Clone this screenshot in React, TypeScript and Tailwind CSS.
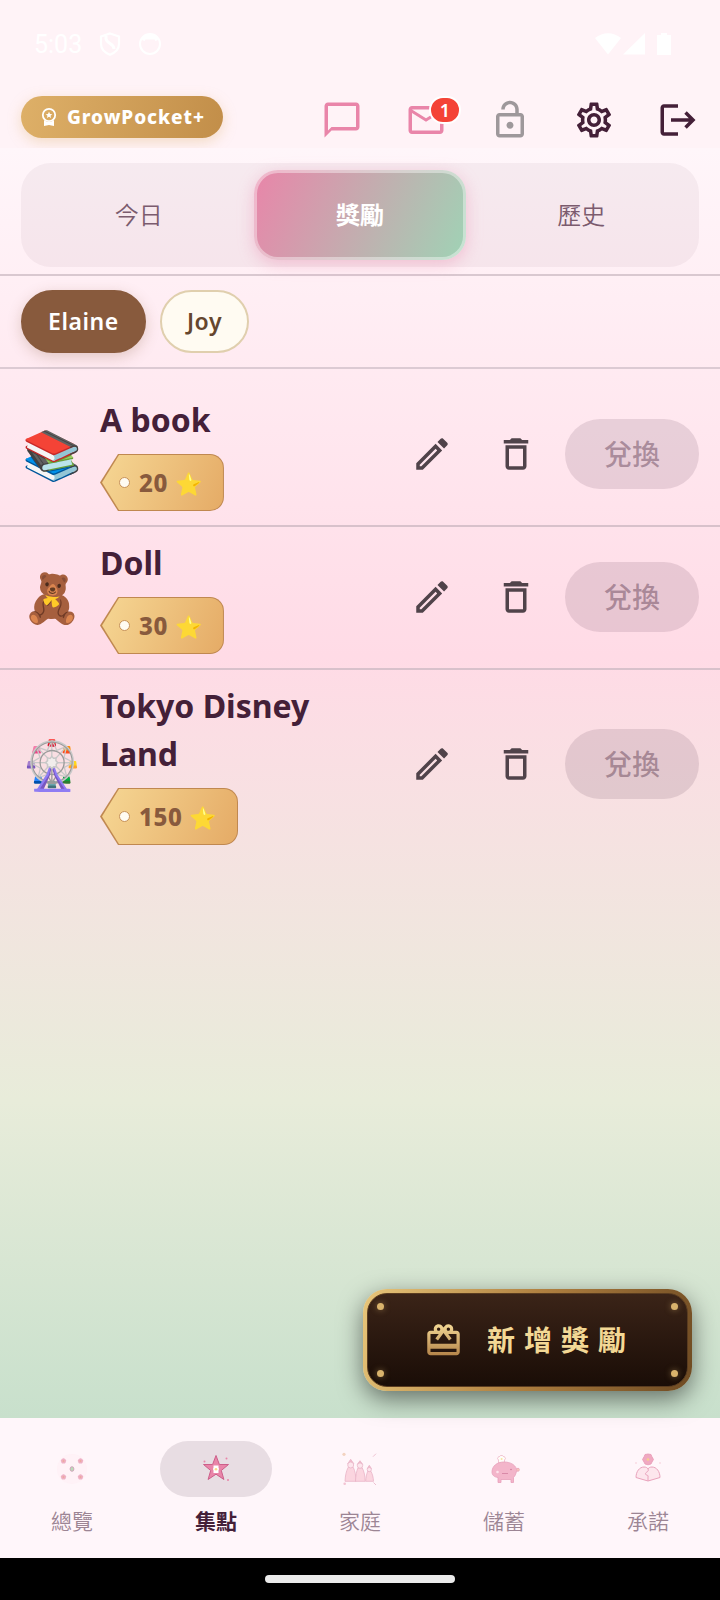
import { clsx } from "clsx";
import type { ReactNode } from "react";
import {
  MdChatBubbleOutline,
  MdDeleteOutline,
  MdLogout,
  MdMailOutline,
  MdOutlineEdit,
  MdOutlineLockOpen,
  MdOutlineRedeem,
  MdOutlineSettings,
} from "react-icons/md";

interface Reward {
  id: string;
  emoji: string;
  title: string;
  cost: number;
}

const rewards: Reward[] = [
  { id: "book", emoji: "📚", title: "A book", cost: 20 },
  { id: "doll", emoji: "🧸", title: "Doll", cost: 30 },
  { id: "disney", emoji: "🎡", title: "Tokyo Disney Land", cost: 150 },
];

const tabs = [
  { id: "today", label: "今日" },
  { id: "rewards", label: "獎勵" },
  { id: "history", label: "歷史" },
];

const children = ["Elaine", "Joy"];

const StatusBar = () => (
  <div className="flex h-[88px] items-center justify-between pl-[34px] pr-[49px] text-white">
    <div className="flex items-center gap-4">
      <span className="font-[Roboto,sans-serif] text-[25px] leading-none">5:03</span>
      <div className="flex items-center gap-4">
        <svg viewBox="0 0 24 24" className="size-6" fill="none" stroke="currentColor" strokeWidth="2.2">
          <path d="M12 1.500 21 4.500v7.500c0 5-3.600 8.500-9 10.800C6.600 20.500 3 17 3 12V4.500z" />
          <path d="M8 4v2.500c0 5 8 4.500 8 10.500" strokeWidth="3" />
        </svg>
        <svg viewBox="0 0 24 24" className="size-6">
          <circle cx="12" cy="12" r="10" fill="none" stroke="currentColor" strokeWidth="2" />
          <path d="M4 8 6 3.500 12 1.500l6 2L20 8l-2.500 1-1-1.500h-9L6.500 9z" fill="currentColor" />
        </svg>
      </div>
    </div>
    <svg viewBox="0 0 76 22" className="h-[22px] w-[76px]" fill="currentColor">
      <path d="M0 5C8-1.500 18-1.500 26 5L13 21.500z" />
      <path d="M50 0v21.500H28z" />
      <path d="M66 0h6v2h4v20H62V2h4z" />
    </svg>
  </div>
);

const HeaderButton = ({ label, className, children: icon }: { label: string; className: string; children: ReactNode }) => (
  <button type="button" aria-label={label} className={clsx("relative flex h-14 w-[84px] items-center justify-center text-[42px]", className)}>
    {icon}
  </button>
);

const Header = () => (
  <header className="bg-[#fff3f7]">
    <StatusBar />
    <div className="flex h-[60px] items-center justify-between pl-[21px]">
      <button
        type="button"
        className="mb-[2px] flex h-[42px] items-center gap-2 rounded-full bg-linear-[102deg] from-[#deb068] to-[#c28e49] px-[18px] text-[19px] font-extrabold tracking-wider text-white shadow-[0_4px_14px_rgba(222,176,104,0.35)]"
      >
        <svg viewBox="0 0 20 20" className="size-5" fill="none" stroke="currentColor">
          <circle cx="10" cy="8" r="6.200" strokeWidth="1.800" />
          <path d="M5 13v6l5-1 5 1v-6c-3 2.500-7 2.500-10 0z" fill="currentColor" stroke="none" />
          <path d="m10 4.800 1 2.200 2.300.2-1.800 1.600.6 2.300-2.100-1.300-2.100 1.300.6-2.300-1.800-1.600L9 7z" fill="currentColor" stroke="none" />
        </svg>
        GrowPocket+
      </button>
      <div className="mt-1 flex">
        <HeaderButton label="訊息" className="text-[#e985a9]">
          <MdChatBubbleOutline />
        </HeaderButton>
        <HeaderButton label="信箱" className="text-[#e985a9]">
          <MdMailOutline />
          <span className="absolute right-[7px] top-1 flex h-7 w-8 items-center justify-center rounded-full border-2 border-white bg-[#f44336] text-[18px] font-semibold leading-none text-white">
            1
          </span>
        </HeaderButton>
        <HeaderButton label="解鎖" className="text-[#9e989b]">
          <MdOutlineLockOpen />
        </HeaderButton>
        <HeaderButton label="設定" className="text-[#442038]">
          <MdOutlineSettings />
        </HeaderButton>
        <HeaderButton label="登出" className="text-[#442038]">
          <MdLogout />
        </HeaderButton>
      </div>
    </div>
  </header>
);

const Tabs = () => (
  <div className="border-b-2 border-[#d9c8d0] px-[21px] pb-[7px] pt-[15px]">
    <div role="tablist" className="grid h-[104px] grid-cols-3 rounded-[30px] bg-[#503040]/5 p-[7px]">
      {tabs.map(tab => {
        const active = tab.id === "rewards";
        return (
          <button
            key={tab.id}
            type="button"
            role="tab"
            aria-selected={active}
            className={clsx(
              "mx-[5px] rounded-[24px] text-[24px]",
              active
                ? "border-[3px] border-white/40 bg-linear-[113deg] from-[#e985a9] to-[#9fd3b5] bg-origin-border font-bold text-white shadow-[0_4px_16px_rgba(233,133,169,0.4)]"
                : "font-[350] text-[#7b5b6e]"
            )}
          >
            {tab.label}
          </button>
        );
      })}
    </div>
  </div>
);

const ChildPicker = () => (
  <div className="flex gap-[14px] border-b-2 border-[#dccad3] px-[21px] pb-[14px] pt-[14px]">
    {children.map((name, i) => (
      <button
        key={name}
        type="button"
        aria-pressed={i === 0}
        className={clsx(
          "h-[63px] rounded-full border-2 px-[25px] text-[23px] font-semibold tracking-wide",
          i === 0
            ? "border-[#885a3d] bg-[#885a3d] text-white shadow-[0_4px_14px_rgba(136,90,61,0.25)]"
            : "border-[#e0cfae] bg-[#fffbf2] text-[#65462e]"
        )}
      >
        {name}
      </button>
    ))}
  </div>
);

const PriceTag = ({ cost }: { cost: number }) => (
  <span className="inline-flex h-[57px] rounded-r-[14px] bg-[#c08850] p-px [clip-path:polygon(0_50%,18px_0,100%_0,100%_100%,18px_100%)]">
    <span className="flex items-center rounded-r-[13px] bg-linear-[114deg] from-[#f6d794] to-[#e5ab66] pl-[18px] pr-[21px] font-extrabold leading-none text-[#885a3d] [clip-path:polygon(1px_50%,18px_0,100%_0,100%_100%,18px_100%)]">
      <span className="mr-[9px] size-[11px] rounded-full border border-[#c6925a] bg-[#fffbf2]" />
      <span className="mr-[7px] text-[24px] tracking-wide">{cost}</span>
      <span className="text-[22px]">⭐</span>
    </span>
  </span>
);

const RewardRow = ({ reward }: { reward: Reward }) => (
  <li className="flex items-center border-b-2 border-[#d8c1cb] px-[21px] pb-[14px] pt-3 last:border-0">
    <span className="w-[62px] shrink-0 text-center text-[48px] leading-none">{reward.emoji}</span>
    <div className="ml-[17px] flex min-w-0 flex-1 flex-col items-start gap-[10px]">
      <h2 className="text-[32px] font-bold leading-[48px] text-[#442038]">{reward.title}</h2>
      <PriceTag cost={reward.cost} />
    </div>
    <button type="button" aria-label={`編輯 ${reward.title}`} className="flex h-[84px] w-[84px] shrink-0 items-center justify-center text-[42px] text-[#50434a]">
      <MdOutlineEdit />
    </button>
    <button type="button" aria-label={`刪除 ${reward.title}`} className="flex h-[84px] w-[84px] shrink-0 items-center justify-center text-[42px] text-[#50434a]">
      <MdDeleteOutline />
    </button>
    <button type="button" disabled className="ml-[7px] h-[70px] w-[134px] shrink-0 rounded-full bg-[#442038]/12 text-[28px] font-medium text-[#442038]/38">
      兌換
    </button>
  </li>
);

const rivets = ["left-[9px] top-[9px]", "right-[9px] top-[9px]", "left-[9px] bottom-[9px]", "right-[9px] bottom-[9px]"];

const AddRewardButton = () => (
  <button
    type="button"
    className="absolute bottom-[27px] right-7 h-[102px] w-[329px] rounded-[24px] bg-linear-[107deg] from-[#e8c67a] via-[#b08040] to-[#6e4a22] p-[4px] shadow-[0_8px_24px_rgba(0,0,0,0.5)]"
  >
    <span className="relative flex h-full items-center justify-center gap-6 rounded-[20px] border border-[#5a3c20] bg-linear-to-b from-[#3b2418] to-[#1a0d07] pl-1 text-[#f3d895]">
      {rivets.map(pos => (
        <span key={pos} className={clsx("absolute size-[7px] rounded-full bg-[#d9b36c] shadow-[0_0_6px_rgba(217,179,108,0.5)]", pos)} />
      ))}
      <svg className="absolute size-0" aria-hidden="true">
        <defs>
          <linearGradient id="gold" x1="0" y1="0" x2="0" y2="1">
            <stop offset="0" stopColor="#f3d895" />
            <stop offset="1" stopColor="#b5854a" />
          </linearGradient>
        </defs>
      </svg>
      <MdOutlineRedeem className="size-[39px] fill-[url(#gold)]" />
      <span className="text-[28px] font-bold tracking-[9px]">新增獎勵</span>
    </span>
  </button>
);

const Flower = ({ x, y, r, fill, core }: { x: number; y: number; r: number; fill: string; core: string }) => (
  <g fill={fill}>
    {[0, 72, 144, 216, 288].map(a => (
      <circle key={a} cx={x} cy={y - r} r={r} transform={`rotate(${a} ${x} ${y})`} />
    ))}
    <circle cx={x} cy={y} r={r * 0.7} fill={core} />
  </g>
);

const OverviewIcon = () => (
  <svg viewBox="0 0 42 42" className="size-[42px]">
    <circle cx="21" cy="21" r="15" fill="#ffeef4" opacity="0.5" />
    <Flower x={12.5} y={13} r={1.4} fill="#eeb0c4" core="#eda89c" />
    <Flower x={29.5} y={13} r={1.4} fill="#eeb0c4" core="#eda89c" />
    <Flower x={12.5} y={29} r={1.4} fill="#eeb0c4" core="#eda89c" />
    <Flower x={29.5} y={29} r={1.4} fill="#eeb0c4" core="#eda89c" />
    <ellipse cx="21" cy="21" rx="1.900" ry="2.300" fill="#b9dcb8" stroke="#d0a5bb" />
  </svg>
);

const StarIcon = () => (
  <svg viewBox="0 0 42 42" className="size-[42px]">
    <path d="m21 7.500 3.400 9h9.100l-7.200 6 2.600 9-7.900-5.300-7.900 5.300 2.600-9-7.200-6h9.100z" fill="#e985a9" stroke="#cc5f8a" />
    <path d="M18.500 17.500h5v2l.5 1.500-.5 1.500v2.500h-5v-2.500L18 21l.5-1.500z" fill="#ffffff" />
    <circle cx="21" cy="21.300" r="1.300" fill="#f7dc8c" />
    <g fill="#e985a9">
      <circle cx="9.500" cy="13.500" r="1" />
      <circle cx="31.500" cy="10.500" r="1" />
      <circle cx="33" cy="32" r="1" />
    </g>
  </svg>
);

const FamilyIcon = () => (
  <svg viewBox="0 0 42 42" className="size-[42px]" fill="#fbd5df" stroke="#e8b4c6" strokeWidth="0.8">
    <path d="M6 33.300c.3-6 1.200-10 3.200-14h5c2 4 2.600 8 2.800 14z" />
    <path d="M16.500 33.300c.2-6 1-10 2.500-13.500h4.200c2 4 2.800 8 3 13.500z" />
    <path d="M26.700 33.300c.2-4 .8-7 2-10h3.200c1.600 3 2.400 6 2.600 10z" />
    <path d="M8.500 16 11.700 11.300 15 16M18.200 16.500 21 12.700l2.800 3.800M28.200 20.700l2.100-3.400 2.200 3.400" fill="#f3bccd" />
    <circle cx="11.700" cy="17" r="3" fill="#fde6ed" />
    <circle cx="21" cy="17.600" r="2.700" fill="#fde6ed" />
    <circle cx="30.300" cy="21.600" r="2.100" fill="#fde6ed" />
    <circle cx="5" cy="6.300" r="1.600" fill="#f3d3c0" stroke="none" />
    <circle cx="5.700" cy="35.700" r="1.300" fill="#f3c3d2" stroke="none" />
    <path d="m34 8.700 3-3M34.500 34.500l2.500 2.500" />
  </svg>
);

const PiggyIcon = () => (
  <svg viewBox="0 0 42 42" className="size-[42px]">
    <path d="M15.500 15v-3l-1-1.500 1.200-2h1l.8-1h2l.8 1h1l1.200 2-1 1.500v3z" fill="#fffdf8" stroke="#edb6c8" strokeWidth="0.800" />
    <circle cx="18.600" cy="11" r="1" fill="#f9e3a6" />
    <path d="M9 24c0-6 5-10 12-10 6 0 11 2.500 12.500 7l2-.5v2.500h-2c-.5 3-1.500 5-3 6.500v5h-2.500v-3h-10v3H15v-5c-4-.5-6-2.500-6-5.500z" fill="#f3b5ca" stroke="#e79fba" strokeWidth="0.800" />
    <path d="M19 25.500h6" stroke="#d98aa8" />
    <circle cx="28" cy="21.500" r="0.700" fill="#c9708f" />
    <circle cx="35" cy="21.700" r="1.500" fill="#f6c4b8" stroke="#e79fba" strokeWidth="0.500" />
    <circle cx="14.500" cy="24" r="1.300" fill="#ffe3ec" />
  </svg>
);

const PromiseIcon = () => (
  <svg viewBox="0 0 42 42" className="size-[42px]">
    <path d="M18 6.500 21 6l3 .5.800 2L26.500 11.500 25 14l-1 2-3 .8-3-.8-1-2-1.500-2.500L17.200 8.500z" fill="#f0a9c1" stroke="#e798b4" strokeWidth="0.800" />
    <circle cx="21" cy="11.500" r="1.300" fill="#f5cf8e" />
    <path d="M21 33 9 29.500c0-6 3.500-10.500 8-10.500 2 0 3.500.8 4 2 .5-1.200 2-2 4-2 4.500 0 8 4.500 8 10.500z" fill="#fde6ed" stroke="#e9a3bc" />
    <path d="M21 21c1.500 3-3 3-2.500 5s3.500.5 2.500 3v4" fill="none" stroke="#e9a3bc" />
    <circle cx="9" cy="15" r="0.800" fill="#f6c8d4" />
    <circle cx="33" cy="15" r="0.800" fill="#f6c8d4" />
  </svg>
);

const navItems = [
  { id: "overview", label: "總覽", icon: OverviewIcon },
  { id: "points", label: "集點", icon: StarIcon },
  { id: "family", label: "家庭", icon: FamilyIcon },
  { id: "savings", label: "儲蓄", icon: PiggyIcon },
  { id: "promise", label: "承諾", icon: PromiseIcon },
];

const BottomNav = () => (
  <nav className="grid h-[140px] grid-cols-5 bg-[#fff6fa] pt-[23px]">
    {navItems.map(({ id, label, icon: Icon }) => {
      const active = id === "points";
      return (
        <button key={id} type="button" aria-current={active ? "page" : undefined} className="flex flex-col items-center gap-2">
          <span className={clsx("flex h-[56px] w-[112px] items-center justify-center rounded-full", active && "bg-[#e8dde3]")}>
            <Icon />
          </span>
          <span className={clsx("text-[21px] leading-8", active ? "font-bold text-[#442038]" : "font-[350] text-[#9c8594]")}>{label}</span>
        </button>
      );
    })}
  </nav>
);

const App = () => (
  <div className="flex min-h-screen flex-col bg-[#fff3f7] font-['Noto_Sans','Noto_Sans_CJK_TC',sans-serif]">
    <Header />
    <main className="relative flex flex-1 flex-col bg-[linear-gradient(180deg,#fff6fa_0%,#ffdbe6_40%,#e8ecda_75%,#c8e0cc_100%)]">
      <Tabs />
      <ChildPicker />
      <ul className="pt-[15px]">
        {rewards.map(reward => (
          <RewardRow key={reward.id} reward={reward} />
        ))}
      </ul>
      <AddRewardButton />
    </main>
    <BottomNav />
    <div className="flex h-[42px] items-center justify-center bg-black">
      <div className="h-2 w-[190px] rounded-full bg-[#ebebeb]" />
    </div>
  </div>
);

export default App;
